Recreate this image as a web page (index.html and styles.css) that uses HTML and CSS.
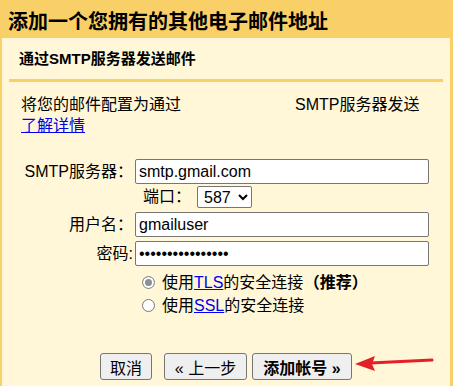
FILE: index.html
```html
<!DOCTYPE html>
<html lang="zh-CN">
<head>
    <meta charset="UTF-8">
    <title>添加一个您拥有的其他电子邮件地址</title>
    <link rel="stylesheet" href="styles.css">
</head>
<body>
    <h1 class="title">添加一个您拥有的其他电子邮件地址</h1>

    <div class="panel">
        <div class="panel-head">通过SMTP服务器发送邮件</div>
        <div class="rule"></div>

        <div class="intro">
            <div class="intro-left">
                将您的邮件配置为通过<br>
                <a href="#">了解详情</a>
            </div>
            <div class="intro-right">SMTP服务器发送</div>
        </div>

        <form class="smtp-form">
            <div class="row">
                <label for="server">SMTP服务器：</label>
                <input type="text" id="server" class="field" value="smtp.gmail.com">
            </div>
            <div class="row port-row">
                <label for="port">端口：</label>
                <select id="port" class="port">
                    <option>587</option>
                    <option>465</option>
                    <option>25</option>
                </select>
            </div>
            <div class="row">
                <label for="user">用户名：</label>
                <input type="text" id="user" class="field" value="gmailuser">
            </div>
            <div class="row">
                <label for="pass">密码:</label>
                <input type="password" id="pass" class="field" value="xxxxxxxxxxxxxxxx">
            </div>

            <div class="radios">
                <label class="radio">
                    <input type="radio" name="security" checked>
                    <span>使用<a href="#">TLS</a>的安全连接 <b>（推荐）</b></span>
                </label>
                <label class="radio">
                    <input type="radio" name="security">
                    <span>使用<a href="#">SSL</a>的安全连接</span>
                </label>
            </div>

            <div class="button-group">
                <button type="button" class="btn btn-cancel">取消</button>
                <button type="button" class="btn btn-back">« 上一步</button>
                <button type="button" class="btn btn-next">添加帐号 »</button>
            </div>
        </form>
    </div>

    <!-- annotation arrow -->
    <svg class="arrow" width="80" height="20" viewBox="0 0 80 20">
        <line x1="78" y1="7" x2="16" y2="10" stroke="#e51f27" stroke-width="3" stroke-linecap="round"/>
        <polygon points="1,11 21,3 18,11 21,18" fill="#e51f27"/>
    </svg>
</body>
</html>
```

FILE: styles.css
```css
* {
    box-sizing: border-box;
}

body {
    margin: 0;
    background: #f9d067;
    font-family: "Liberation Sans", "Noto Sans CJK SC", sans-serif;
    font-size: 16px;
    line-height: 20px;
    color: #000;
    position: relative;
    overflow: hidden;
    height: 386px;
}

.title {
    margin: 0;
    padding: 10px 0 4px 8px;
    font-size: 20px;
    line-height: 24px;
    font-weight: bold;
}

.panel {
    margin: 0 3px 0 2px;
    padding: 0 7px;
    height: 348px;
    background: #fff7d8;
}

.panel-head {
    padding: 11px 0 0 10px;
    font-size: 15px;
    line-height: 20px;
    font-weight: bold;
}

.rule {
    height: 3px;
    margin-top: 10px;
    background: #f9d067;
}

.intro {
    display: flex;
    margin-top: 12px;
    padding-left: 12px;
    line-height: 21px;
}

.intro-left {
    width: 274px;
}

a {
    color: #0000ee;
}

.smtp-form {
    margin-top: 23px;
}

.row {
    display: flex;
    align-items: center;
    margin-bottom: 4px;
}

.row label {
    width: 124px;
    text-align: right;
    white-space: nowrap;
}

.field {
    width: 294px;
    height: 25px;
    margin-left: 2px;
    padding: 0 3px;
    border: 1px solid #767676;
    border-radius: 2px;
    background: #fff;
    font-family: "Liberation Sans", sans-serif;
    font-size: 16px;
}

.row.port-row {
    margin-top: -2px;
    height: 22px;
}

.port-row label {
    width: auto;
    margin-left: 134px;
    margin-right: 6px;
}

.port {
    width: 55px;
    height: 22px;
    padding: 0 0 0 2px;
    border: 1px solid #767676;
    border-radius: 2px;
    background: #fff;
    font-family: "Liberation Sans", sans-serif;
    font-size: 16px;
}

.radios {
    margin-top: 5px;
    padding-left: 133px;
}

.radio {
    display: flex;
    align-items: center;
    height: 23px;
}

.radio input {
    appearance: none;
    width: 13px;
    height: 13px;
    margin: 0 7px 0 0;
    border: 1px solid #767676;
    border-radius: 50%;
    background: #fff;
}

.radio input:checked {
    border-color: #8f8f8f;
    background: #8f8f8f;
    box-shadow: inset 0 0 0 2px #fff;
}

.radio b {
    margin-left: -4px;
}

.button-group {
    display: flex;
    margin-top: 36px;
    padding-left: 91px;
}

.btn {
    height: 27px;
    padding: 0 8px;
    border: 1px solid #767676;
    border-radius: 3px;
    background: #efefef;
    font-family: "Liberation Sans", "Noto Sans CJK SC", sans-serif;
    font-size: 16px;
    color: #000;
}

.btn-cancel {
    width: 52px;
}

.btn-back {
    margin-left: 12px;
    width: 83px;
}

.btn-next {
    margin-left: 5px;
    width: 100px;
    font-weight: bold;
}

.arrow {
    position: absolute;
    left: 354px;
    top: 353px;
}
```
